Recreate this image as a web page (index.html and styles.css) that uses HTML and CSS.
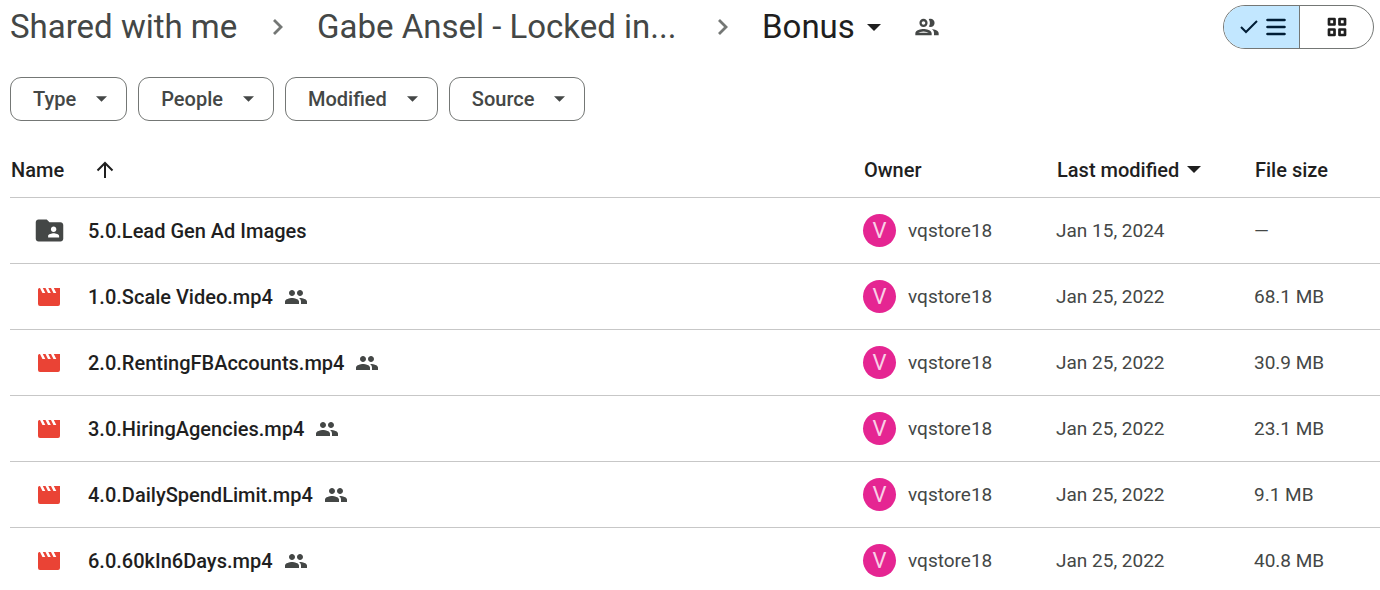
FILE: index.html
```html
<!DOCTYPE html>
<html lang="en">
<head>
<meta charset="utf-8">
<meta name="viewport" content="width=device-width, initial-scale=1">
<title>Bonus</title>
<link rel="stylesheet" href="styles.css">
</head>
<body>
<svg class="sprite" aria-hidden="true">
  <symbol id="caret" viewBox="0 0 10 5"><path d="M0 0h10L5 5z"/></symbol>
  <symbol id="chevron" viewBox="0 0 10 16"><path d="M1 1l7 7-7 7" fill="none" stroke="currentColor" stroke-width="2.800"/></symbol>
  <symbol id="people" viewBox="1 5 22 14"><path d="M16 11c1.660 0 2.990-1.340 2.990-3S17.660 5 16 5s-3 1.340-3 3 1.340 3 3 3zm-8 0c1.660 0 2.990-1.340 2.990-3S9.660 5 8 5 5 6.340 5 8s1.340 3 3 3zm0 2c-2.330 0-7 1.170-7 3.500V19h14v-2.500c0-2.330-4.670-3.500-7-3.500zm8 0c-.29 0-.62.02-.97.05 1.160.84 1.970 1.970 1.970 3.450V19h6v-2.500c0-2.330-4.670-3.500-7-3.500z"/></symbol>
  <symbol id="movie" viewBox="0 0 22 18"><path d="M1.500 0H2L4.500 5h2.800L4.800 0h2.700L10 5h2.800L10.300 0H13l2.500 5h2.800L15.800 0H22v16a2 2 0 0 1-2 2H2a2 2 0 0 1-2-2V1.500A1.500 1.500 0 0 1 1.500 0z"/></symbol>
  <symbol id="folder" viewBox="0 0 24 24"><path d="M20 6h-8l-2-2H4c-1.100 0-2 .9-2 2v12c0 1.100.9 2 2 2h16c1.100 0 2-.9 2-2V8c0-1.100-.9-2-2-2zm-5 3c1.100 0 2 .9 2 2s-.9 2-2 2-2-.9-2-2 .9-2 2-2zm4 8h-8v-1c0-1.330 2.670-2 4-2s4 .67 4 2v1z"/></symbol>
</svg>
<header class="top">
  <nav class="crumbs" aria-label="Breadcrumb">
    <a class="crumb crumb-root" href="#">Shared with me</a>
    <svg class="chevron"><use href="#chevron"/></svg>
    <a class="crumb crumb-parent" href="#">Gabe Ansel - Locked in...</a>
    <svg class="chevron"><use href="#chevron"/></svg>
    <button class="crumb crumb-current" type="button">Bonus <svg class="caret-lg"><use href="#caret"/></svg></button>
    <button class="share" type="button" aria-label="Manage access">
      <svg class="share-icon" viewBox="0 0 24 24"><path d="M9 13.750c-2.340 0-7 1.170-7 3.500V19h14v-1.750c0-2.330-4.660-3.500-7-3.500zM4.340 17c.84-.58 2.870-1.250 4.660-1.250s3.820.67 4.660 1.250H4.340zM9 12c1.930 0 3.500-1.570 3.500-3.500S10.930 5 9 5 5.500 6.570 5.500 8.500 7.070 12 9 12zm0-5c.83 0 1.500.67 1.500 1.500S9.830 10 9 10s-1.500-.67-1.500-1.500S8.170 7 9 7zm7.040 6.810c1.160.84 1.960 1.960 1.960 3.440V19h4v-1.750c0-2.020-3.500-3.170-5.960-3.440zM15 12c1.930 0 3.500-1.570 3.500-3.500S16.930 5 15 5c-.54 0-1.040.13-1.500.35.63.89 1 1.980 1 3.150s-.37 2.260-1 3.150c.46.22.96.35 1.500.35z"/></svg>
    </button>
  </nav>
  <div class="views" role="group" aria-label="Layout">
    <button class="view view-list" type="button" aria-label="List layout" aria-pressed="true">
      <svg class="check" viewBox="0 0 18 14"><path d="M1 7l5 5L17 1" fill="none" stroke="currentColor" stroke-width="2"/></svg>
      <svg class="lines" viewBox="0 0 20 18"><path d="M1.500 2h17M1.500 9h17M1.500 16h17" fill="none" stroke="currentColor" stroke-width="2.600" stroke-linecap="round"/></svg>
    </button>
    <button class="view view-grid" type="button" aria-label="Grid layout" aria-pressed="false">
      <svg class="tiles" viewBox="0 0 20 20"><path d="M2 2h5.500v5.500H2zM12.500 2H18v5.500h-5.500zM2 12.500h5.500V18H2zM12.500 12.500H18V18h-5.500z" fill="none" stroke="currentColor" stroke-width="2.700" stroke-linejoin="round"/></svg>
    </button>
  </div>
</header>
<div class="filters">
  <button class="filter" type="button">Type <svg class="caret"><use href="#caret"/></svg></button>
  <button class="filter" type="button">People <svg class="caret"><use href="#caret"/></svg></button>
  <button class="filter" type="button">Modified <svg class="caret"><use href="#caret"/></svg></button>
  <button class="filter" type="button">Source <svg class="caret"><use href="#caret"/></svg></button>
</div>
<table class="files">
  <thead>
    <tr>
      <th class="col-name" scope="col"><span class="head">Name <svg class="arrow" viewBox="0 0 18 18"><path d="M9 17V2M1.500 9.500L9 2l7.500 7.500" fill="none" stroke="currentColor" stroke-width="2"/></svg></span></th>
      <th class="col-owner" scope="col">Owner</th>
      <th class="col-date" scope="col"><span class="sort">Last modified <svg class="caret-md"><use href="#caret"/></svg></span></th>
      <th class="col-size" scope="col">File size</th>
    </tr>
  </thead>
  <tbody>
    <tr><td><div class="file"><span class="kind"><svg class="folder"><use href="#folder"/></svg></span><span>5.0.Lead Gen Ad Images</span></div></td><td><div class="owner"><span class="avatar">V</span>vqstore18</div></td><td>Jan 15, 2024</td><td>—</td></tr>
    <tr><td><div class="file"><span class="kind"><svg class="movie"><use href="#movie"/></svg></span><span>1.0.Scale Video.mp4</span><svg class="people"><use href="#people"/></svg></div></td><td><div class="owner"><span class="avatar">V</span>vqstore18</div></td><td>Jan 25, 2022</td><td>68.1 MB</td></tr>
    <tr><td><div class="file"><span class="kind"><svg class="movie"><use href="#movie"/></svg></span><span>2.0.RentingFBAccounts.mp4</span><svg class="people"><use href="#people"/></svg></div></td><td><div class="owner"><span class="avatar">V</span>vqstore18</div></td><td>Jan 25, 2022</td><td>30.9 MB</td></tr>
    <tr><td><div class="file"><span class="kind"><svg class="movie"><use href="#movie"/></svg></span><span>3.0.HiringAgencies.mp4</span><svg class="people"><use href="#people"/></svg></div></td><td><div class="owner"><span class="avatar">V</span>vqstore18</div></td><td>Jan 25, 2022</td><td>23.1 MB</td></tr>
    <tr><td><div class="file"><span class="kind"><svg class="movie"><use href="#movie"/></svg></span><span>4.0.DailySpendLimit.mp4</span><svg class="people"><use href="#people"/></svg></div></td><td><div class="owner"><span class="avatar">V</span>vqstore18</div></td><td>Jan 25, 2022</td><td>9.1 MB</td></tr>
    <tr><td><div class="file"><span class="kind"><svg class="movie"><use href="#movie"/></svg></span><span>6.0.60kIn6Days.mp4</span><svg class="people"><use href="#people"/></svg></div></td><td><div class="owner"><span class="avatar">V</span>vqstore18</div></td><td>Jan 25, 2022</td><td>40.8 MB</td></tr>
  </tbody>
</table>
</body>
</html>
```
FILE: styles.css
```css
* { box-sizing: border-box; }
body {
  margin: 0;
  padding: 5px 0 0 10px;
  background: #fff;
  color: #444746;
  font-family: Roboto, "Liberation Sans", sans-serif;
  font-size: 20px;
  line-height: 24px;
}
svg { display: block; flex: none; fill: currentColor; }
button { margin: 0; padding: 0; border: 0; background: none; color: inherit; font: inherit; cursor: pointer; }
.sprite { position: absolute; width: 0; height: 0; }

.top { display: flex; align-items: center; justify-content: space-between; height: 44px; padding-right: 6px; }
.crumbs { display: flex; align-items: center; font-size: 33px; line-height: 44px; white-space: nowrap; }
.crumb { color: #444746; text-decoration: none; }
.crumb-root { min-width: 229px; }
.crumb-parent { min-width: 367px; }
.chevron { width: 10px; height: 16px; margin: 0 34px; color: #747775; }
.crumb-current { display: flex; align-items: center; gap: 12px; color: #1f1f1f; }
.caret-lg { width: 14px; height: 7px; }
.share { margin-left: 32px; }
.share-icon { width: 28px; height: 28px; }

.views { display: flex; width: 151px; height: 44px; border: 1px solid #747775; border-radius: 22px; overflow: hidden; }
.view { display: flex; align-items: center; justify-content: center; flex: 1; }
.view-list { gap: 8px; padding-left: 2px; background: #c2e7ff; color: #001d35; border-right: 1px solid #747775; }
.view-grid { color: #1f1f1f; }
.check { width: 18px; height: 14px; }
.lines { width: 20px; height: 18px; }
.tiles { width: 20px; height: 20px; }

.filters { display: flex; gap: 11px; margin-top: 28px; }
.filter { display: flex; align-items: center; gap: 20px; height: 44px; padding: 0 19px 0 22px; border: 1px solid #747775; border-radius: 11px; font-weight: 500; }
.caret { width: 11px; height: 6px; }

.files { width: 100%; margin-top: 22px; border-collapse: separate; border-spacing: 0; table-layout: fixed; white-space: nowrap; }
th { height: 55px; padding: 0 0 1px 1px; border-bottom: 1px solid #c7c7c7; color: #1f1f1f; font-weight: 500; text-align: left; }
.col-owner { width: 193px; }
.col-date { width: 198px; }
.col-size { width: 126px; }
.head { display: flex; align-items: center; gap: 32px; }
.arrow { width: 18px; height: 18px; }
.sort { display: flex; align-items: center; gap: 8px; }
.caret-md { width: 14px; height: 7px; }
td { padding: 16px 0; border-bottom: 1px solid #c7c7c7; font-size: 19px; }
tr:last-child td { padding-bottom: 12px; border-bottom: 0; }
.file { display: flex; align-items: center; height: 33px; color: #1f1f1f; font-size: 20px; font-weight: 500; }
.kind { display: flex; justify-content: center; width: 78px; color: #444746; }
.folder { width: 33px; height: 33px; }
.movie { width: 22px; height: 18px; color: #ea4335; }
.people { width: 22px; height: 14px; margin-left: 12px; color: #444746; }
.owner { display: flex; align-items: center; gap: 12px; }
.avatar { display: flex; align-items: center; justify-content: center; width: 33px; height: 33px; border-radius: 50%; background: #e52592; color: #f9cfe6; font-size: 22px; }
```
